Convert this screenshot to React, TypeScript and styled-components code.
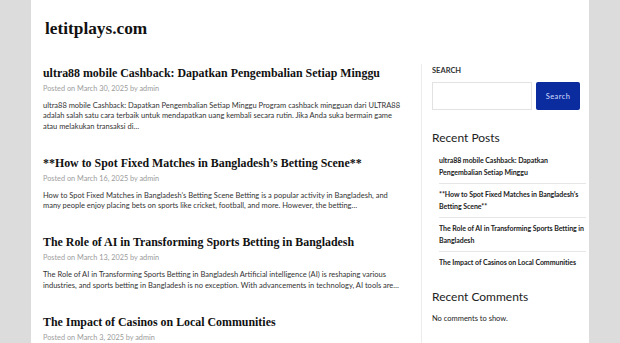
import styled, { createGlobalStyle } from "styled-components";

const posts = [
    {
        title: 'ultra88 mobile Cashback: Dapatkan Pengembalian Setiap Minggu',
        date: 'March 30, 2025',
        excerpt: 'ultra88 mobile Cashback: Dapatkan Pengembalian Setiap Minggu Program cashback mingguan dari ULTRA88 adalah salah satu cara terbaik untuk mendapatkan uang kembali secara rutin. Jika Anda suka bermain game atau melakukan transaksi di…',
    },
    {
        title: '**How to Spot Fixed Matches in Bangladesh’s Betting Scene**',
        date: 'March 16, 2025',
        excerpt: 'How to Spot Fixed Matches in Bangladesh’s Betting Scene Betting is a popular activity in Bangladesh, and many people enjoy placing bets on sports like cricket, football, and more. However, the betting…',
    },
    {
        title: 'The Role of AI in Transforming Sports Betting in Bangladesh',
        date: 'March 13, 2025',
        excerpt: 'The Role of AI in Transforming Sports Betting in Bangladesh Artificial intelligence (AI) is reshaping various industries, and sports betting in Bangladesh is no exception. With advancements in technology, AI tools are…',
    },
    {
        title: 'The Impact of Casinos on Local Communities',
        date: 'March 3, 2025',
        excerpt: '',
    },
]

const recentPosts = [
    'ultra88 mobile Cashback: Dapatkan Pengembalian Setiap Minggu',
    '**How to Spot Fixed Matches in Bangladesh’s Betting Scene**',
    'The Role of AI in Transforming Sports Betting in Bangladesh',
    'The Impact of Casinos on Local Communities',
]

const GlobalStyle = createGlobalStyle`
    html, body {
        margin: 0;
        padding: 0;
        background: #dcdcdc;
        height: 100%;
        overflow: hidden;
    }
    * {
        box-sizing: border-box;
    }
`

export default function App() {
    return (
        <>
            <GlobalStyle/>
            <Page>
                <Header>
                    <SiteTitle>letitplays.com</SiteTitle>
                </Header>
                <Content>
                    <Main>
                        {posts.map((post, index) => (
                            <Post key={index}>
                                <PostTitle>{post.title}</PostTitle>
                                <Meta>Posted on <MetaLink>{post.date}</MetaLink> by <MetaLink>admin</MetaLink></Meta>
                                {post.excerpt && <Excerpt>{post.excerpt}</Excerpt>}
                            </Post>
                        ))}
                    </Main>
                    <Sidebar>
                        <WidgetLabel>Search</WidgetLabel>
                        <SearchForm>
                            <SearchInput type="text"/>
                            <SearchButton>Search</SearchButton>
                        </SearchForm>
                        <WidgetTitle>Recent Posts</WidgetTitle>
                        <RecentList>
                            {recentPosts.map((item, index) => (
                                <RecentItem key={index}>{item}</RecentItem>
                            ))}
                        </RecentList>
                        <WidgetTitle $top={15}>Recent Comments</WidgetTitle>
                        <NoComments>No comments to show.</NoComments>
                    </Sidebar>
                </Content>
            </Page>
        </>
    );
}

const Page = styled.div`
    width: 558px;
    min-height: 100vh;
    margin: 0 auto;
    background: #fff;
`
const Header = styled.header`
    height: 64px;
    padding: 17px 14px 0;
`
const SiteTitle = styled.h1`
    margin: 0;
    font-family: "Liberation Serif", serif;
    font-weight: 700;
    font-size: 17.3px;
    line-height: 24px;
    color: #111;
`
const Content = styled.div`
    display: flex;
`
const Main = styled.main`
    width: 390px;
    padding: 0 18px 0 12px;
`
const Post = styled.article`
    margin-bottom: 22px;
`
const PostTitle = styled.h2`
    margin: 0;
    font-family: "Liberation Serif", serif;
    font-weight: 700;
    font-size: 11.9px;
    line-height: 18px;
    color: #111;
`
const Meta = styled.div`
    margin-top: 1px;
    font-family: Lato, sans-serif;
    font-size: 7.3px;
    line-height: 12px;
    color: #a0a0a0;
`
const MetaLink = styled.span`
    color: #9a9a9a;
`
const Excerpt = styled.p`
    margin: 6px 0 0;
    font-family: Lato, sans-serif;
    font-size: 7.5px;
    line-height: 10.3px;
    color: #333;
`
const Sidebar = styled.aside`
    width: 168px;
    border-left: 1px solid #ececec;
    padding: 1px 3px 0 10px;
    min-height: 300px;
`
const WidgetLabel = styled.div`
    font-family: Lato, sans-serif;
    font-weight: 700;
    font-size: 7.5px;
    line-height: 12px;
    text-transform: uppercase;
    color: #333;
`
const SearchForm = styled.div`
    display: flex;
    gap: 4px;
    width: 148px;
    margin-top: 5px;
`
const SearchInput = styled.input`
    flex: 1;
    min-width: 0;
    height: 28px;
    border: 1px solid #e2e2e2;
    background: #fff;
    padding: 0 4px;
`
const SearchButton = styled.button`
    width: 44px;
    height: 28px;
    border: none;
    border-radius: 2px;
    background: #0a2c9e;
    color: #d4dcff;
    font-family: Lato, sans-serif;
    font-size: 7.5px;
    letter-spacing: 0.4px;
    padding: 0;
`
const WidgetTitle = styled.h3<{ $top?: number }>`
    margin: ${({$top}) => $top ?? 20}px 0 0;
    font-family: Lato, sans-serif;
    font-weight: 400;
    font-size: 12px;
    line-height: 16px;
    color: #222;
`
const RecentList = styled.ul`
    list-style: none;
    margin: 4px 0 0;
    padding: 0 0 0 7px;
`
const RecentItem = styled.li`
    padding: 5px 0;
    font-family: Lato, sans-serif;
    font-weight: 700;
    font-size: 7px;
    line-height: 11.5px;
    letter-spacing: -0.05px;
    color: #222;
    border-bottom: 1px solid #e6e6e6;

    &:last-child {
        border-bottom: none;
    }
`
const NoComments = styled.p`
    margin: 8px 0 0;
    font-family: Lato, sans-serif;
    font-size: 7.5px;
    line-height: 11px;
    color: #222;
`
